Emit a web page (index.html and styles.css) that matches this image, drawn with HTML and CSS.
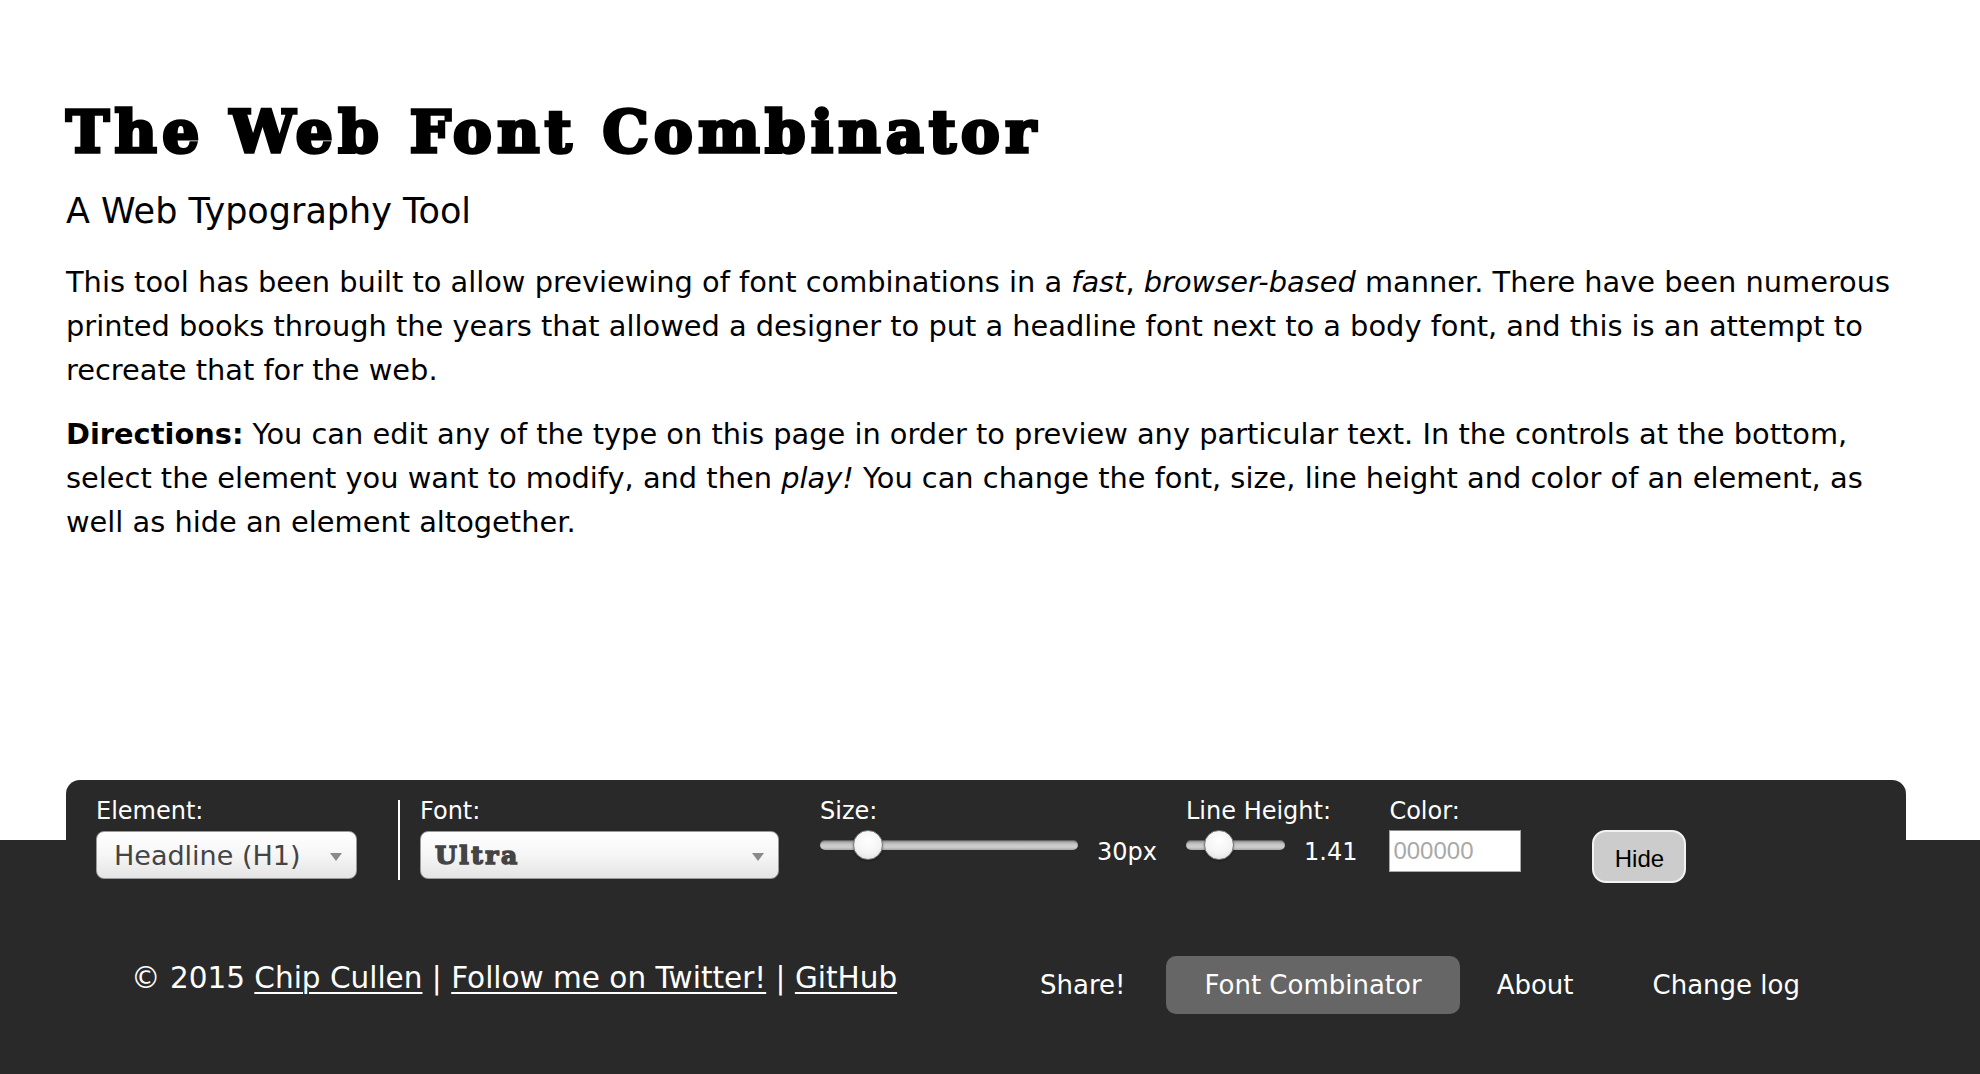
FILE: index.html
```html
<!DOCTYPE html>
<html lang="en">
<head>
<meta charset="utf-8">
<title>The Web Font Combinator</title>
<link rel="stylesheet" href="styles.css">
</head>
<body>
<main class="content">
  <h1 class="title">The Web Font Combinator</h1>
  <h2 class="subtitle">A Web Typography Tool</h2>
  <p class="copy copy-intro">This tool has been built to allow previewing of font combinations in a <em>fast</em>, <em>browser-based</em> manner. There have been numerous printed books through the years that allowed a designer to put a headline font next to a body font, and this is an attempt to recreate that for the web.</p>
  <p class="copy copy-directions"><strong>Directions:</strong> You can edit any of the type on this page in order to preview any particular text. In the controls at the bottom, select the element you want to modify, and then <em>play!</em> You can change the font, size, line height and color of an element, as well as hide an element altogether.</p>
</main>
<footer class="dock">
  <div class="panel">
    <div class="controls">
      <div class="field field-element">
        <div class="label">Element:</div>
        <div class="select select-element"><span class="select-text">Headline (H1)</span><span class="caret"></span></div>
      </div>
      <div class="divider"></div>
      <div class="field field-font">
        <div class="label">Font:</div>
        <div class="select select-font"><span class="select-text ultra">Ultra</span><span class="caret"></span></div>
      </div>
      <div class="field field-size">
        <div class="label">Size:</div>
        <div class="slider-row">
          <div class="track track-size"><span class="thumb" style="left: 33px"></span></div>
          <span class="value">30px</span>
        </div>
      </div>
      <div class="field field-lh">
        <div class="label">Line Height:</div>
        <div class="slider-row">
          <div class="track track-lh"><span class="thumb" style="left: 18px"></span></div>
          <span class="value">1.41</span>
        </div>
      </div>
      <div class="field field-color">
        <div class="label">Color:</div>
        <input class="color-input" type="text" placeholder="000000">
      </div>
      <div class="field field-hide">
        <button class="hide-btn" type="button">Hide</button>
      </div>
    </div>
    <div class="bottom-row">
      <div class="credits">© 2015 <a href="#">Chip Cullen</a> | <a href="#">Follow me on Twitter!</a> | <a href="#">GitHub</a></div>
      <nav class="nav">
        <a class="nav-item" href="#">Share!</a>
        <a class="nav-item nav-active" href="#">Font Combinator</a>
        <a class="nav-item" href="#">About</a>
        <a class="nav-item" href="#">Change log</a>
      </nav>
    </div>
  </div>
</footer>
</body>
</html>
```

FILE: styles.css
```css
* { box-sizing: border-box; }

html, body {
  margin: 0;
  padding: 0;
}

body {
  min-height: 100vh;
  display: flex;
  flex-direction: column;
  background: #fff;
  color: #000;
  font-family: "DejaVu Sans", Verdana, sans-serif;
}

.content {
  flex: 1;
  padding: 0 66px;
}

.title {
  margin: 99px 0 0;
  font-family: "DejaVu Serif", "Liberation Serif", serif;
  font-weight: 700;
  font-size: 58px;
  line-height: 66px;
  letter-spacing: 5.4px;
  -webkit-text-stroke: 3.5px #000;
  color: #000;
}

.subtitle {
  margin: 26px 0 0;
  font-weight: 400;
  font-size: 35px;
  line-height: 40px;
}

.copy {
  margin: 24px 0 0;
  font-size: 28.85px;
  line-height: 44px;
}

.copy-intro { margin-top: 29px; }
.copy-directions { margin-top: 20px; }

.copy strong { font-weight: 700; }

/* ---------- dock ---------- */
.dock {
  height: 294px;
  padding: 0 74px 0 66px;
  background: linear-gradient(to bottom, transparent 60px, #292929 60px);
}

.panel {
  height: 100%;
  background: #292929;
  border-radius: 14px 14px 0 0;
  padding: 17px 66px 0 30px;
  color: #fff;
}

.controls {
  display: flex;
  align-items: flex-start;
}

.field {
  display: flex;
  flex-direction: column;
}

.label {
  font-size: 24px;
  line-height: 28px;
  height: 28px;
  margin-bottom: 6px;
  white-space: nowrap;
}

.select {
  position: relative;
  height: 48px;
  border: 1px solid #9a9a9a;
  border-radius: 8px;
  background: linear-gradient(to bottom, #ffffff 0%, #f6f6f6 50%, #e4e4e4 100%);
  display: flex;
  align-items: center;
}

.select-text {
  font-size: 27px;
  color: #444;
  white-space: nowrap;
}

.select-element { width: 261px; padding-left: 17px; }
.select-font { width: 359px; padding-left: 14px; }

.ultra {
  font-family: "DejaVu Serif", serif;
  font-weight: 700;
  font-size: 25px;
  letter-spacing: 2.5px;
  -webkit-text-stroke: 1.6px #444;
}

.caret {
  position: absolute;
  top: 21px;
  right: 14px;
  width: 0;
  height: 0;
  border-left: 6px solid transparent;
  border-right: 6px solid transparent;
  border-top: 8px solid #8a8a8a;
}

.divider {
  width: 2px;
  height: 80px;
  margin: 3px 20px 0 41px;
  background: #fff;
}

.field-size { margin-left: 41px; }
.field-lh { margin-left: 29px; }
.field-color { margin-left: 32px; }
.field-hide { margin-left: 71px; padding-top: 33px; }

.slider-row {
  display: flex;
  align-items: flex-start;
  margin-top: -1px;
  height: 30px;
}

.track {
  position: relative;
  height: 10px;
  margin-top: 10px;
  border-radius: 5px;
  background: linear-gradient(to bottom, #888 0%, #c4c4c4 40%, #d0d0d0 70%, #a8a8a8 100%);
  box-shadow: inset 0 1px 1px rgba(0,0,0,0.35);
}

.track-size { width: 258px; }
.track-lh { width: 99px; }

.thumb {
  position: absolute;
  top: -10px;
  width: 30px;
  height: 30px;
  border-radius: 50%;
  border: 1px solid #777;
  background: radial-gradient(circle at 50% 35%, #ffffff 0%, #f4f4f4 55%, #d8d8d8 100%);
  box-shadow: 0 1px 2px rgba(0,0,0,0.4);
}

.value {
  font-size: 24px;
  line-height: 30px;
  padding-top: 7px;
  margin-left: 19px;
  white-space: nowrap;
}

.color-input {
  width: 132px;
  height: 42px;
  margin: -1px 0 0 0;
  padding: 0 0 0 3px;
  border: 1px solid #a9a9a9;
  border-top-color: #8a8a8a;
  background: #fff;
  font-family: "Liberation Sans", Arial, sans-serif;
  font-size: 24px;
  color: #000;
  outline: none;
}

.color-input::placeholder { color: #a9a9a9; }

.hide-btn {
  width: 94px;
  height: 53px;
  border: 2px solid #f2f2f2;
  border-radius: 14px;
  background: #cccccc;
  font-family: "Liberation Sans", Arial, sans-serif;
  font-size: 24px;
  color: #000;
  padding: 4px 0 0;
  cursor: pointer;
}

/* ---------- bottom row ---------- */
.bottom-row {
  display: flex;
  justify-content: space-between;
  align-items: flex-start;
  margin-top: 73px;
  margin-left: 35px;
}

.credits {
  font-size: 29.5px;
  line-height: 44px;
  white-space: nowrap;
}

.credits a {
  color: #fff;
  text-decoration: underline;
  text-underline-offset: 4px;
  text-decoration-thickness: 2px;
}

.nav {
  display: flex;
}

.nav-item {
  display: block;
  height: 58px;
  line-height: 58px;
  padding: 0 40px;
  border-radius: 10px;
  color: #fff;
  text-decoration: none;
  font-size: 26px;
  white-space: nowrap;
}

.nav-item:first-child { padding: 0 41px 0 46px; }
.nav-active { background: #666; padding: 0 38px; }
.nav-item:nth-child(3) { padding: 0 39px 0 37px; }
```
